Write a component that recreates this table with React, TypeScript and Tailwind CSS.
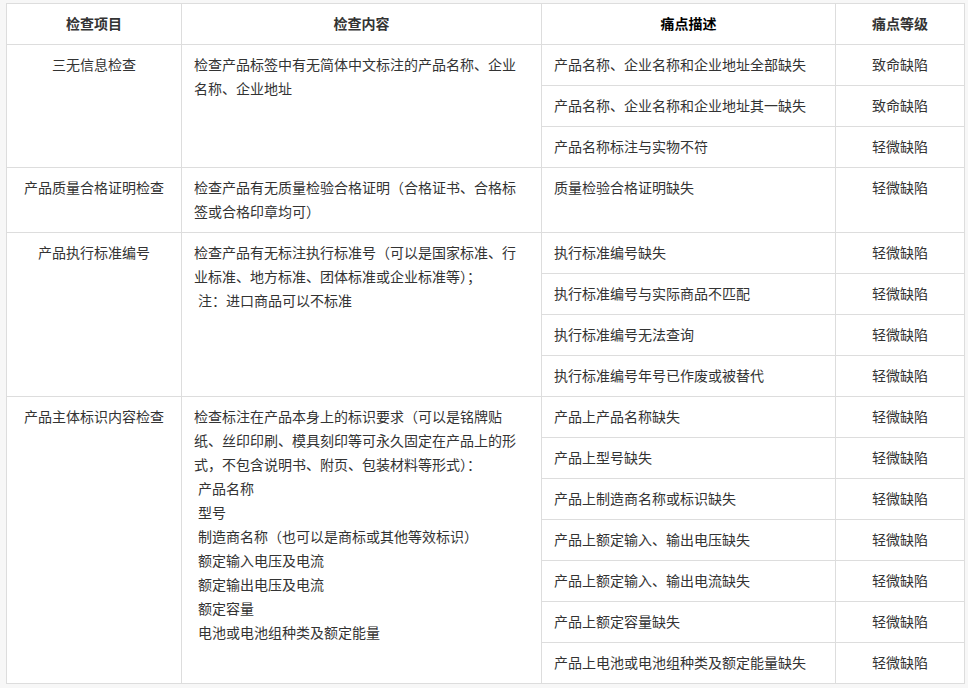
import type { ReactNode } from "react"

type SubRow = { desc: string; level: string }

type Group = {
  item: string
  content: ReactNode
  rows: SubRow[]
}

const fontStack = {
  fontFamily:
    '"Microsoft YaHei", "Noto Sans CJK SC", "Noto Sans", sans-serif',
}

const cellClass =
  "border border-[#dddddd] px-3 pt-[7px] pb-[9px] align-top text-[14px] leading-6 text-[#333333]"

const groups: Group[] = [
  {
    item: "三无信息检查",
    content: "检查产品标签中有无简体中文标注的产品名称、企业名称、企业地址",
    rows: [
      { desc: "产品名称、企业名称和企业地址全部缺失", level: "致命缺陷" },
      { desc: "产品名称、企业名称和企业地址其一缺失", level: "致命缺陷" },
      { desc: "产品名称标注与实物不符", level: "轻微缺陷" },
    ],
  },
  {
    item: "产品质量合格证明检查",
    content: "检查产品有无质量检验合格证明（合格证书、合格标签或合格印章均可）",
    rows: [{ desc: "质量检验合格证明缺失", level: "轻微缺陷" }],
  },
  {
    item: "产品执行标准编号",
    content: (
      <>
        <p>
          检查产品有无标注执行标准号（可以是国家标准、行业标准、地方标准、团体标准或企业标准等）；
        </p>
        <p className="pl-1">注：进口商品可以不标准</p>
      </>
    ),
    rows: [
      { desc: "执行标准编号缺失", level: "轻微缺陷" },
      { desc: "执行标准编号与实际商品不匹配", level: "轻微缺陷" },
      { desc: "执行标准编号无法查询", level: "轻微缺陷" },
      { desc: "执行标准编号年号已作废或被替代", level: "轻微缺陷" },
    ],
  },
  {
    item: "产品主体标识内容检查",
    content: (
      <>
        <p>
          检查标注在产品本身上的标识要求（可以是铭牌贴纸、丝印印刷、模具刻印等可永久固定在产品上的形式，不包含说明书、附页、包装材料等形式）：
        </p>
        {[
          "产品名称",
          "型号",
          "制造商名称（也可以是商标或其他等效标识）",
          "额定输入电压及电流",
          "额定输出电压及电流",
          "额定容量",
          "电池或电池组种类及额定能量",
        ].map((line) => (
          <p key={line} className="pl-1">
            {line}
          </p>
        ))}
      </>
    ),
    rows: [
      { desc: "产品上产品名称缺失", level: "轻微缺陷" },
      { desc: "产品上型号缺失", level: "轻微缺陷" },
      { desc: "产品上制造商名称或标识缺失", level: "轻微缺陷" },
      { desc: "产品上额定输入、输出电压缺失", level: "轻微缺陷" },
      { desc: "产品上额定输入、输出电流缺失", level: "轻微缺陷" },
      { desc: "产品上额定容量缺失", level: "轻微缺陷" },
      { desc: "产品上电池或电池组种类及额定能量缺失", level: "轻微缺陷" },
    ],
  },
]

export default function App() {
  return (
    <div
      className="min-h-screen bg-[#f7f7f7] pt-[3px] pl-[6px]"
      style={fontStack}
    >
      <table className="w-[958px] table-fixed border-collapse bg-white">
        <colgroup>
          <col className="w-[175px]" />
          <col className="w-[360px]" />
          <col className="w-[294px]" />
          <col className="w-[129px]" />
        </colgroup>
        <thead>
          <tr>
            <th className={`${cellClass} text-center font-bold`}>检查项目</th>
            <th className={`${cellClass} text-center font-bold`}>检查内容</th>
            <th className={`${cellClass} text-center font-bold text-black`}>
              痛点描述
            </th>
            <th className={`${cellClass} text-center font-bold`}>痛点等级</th>
          </tr>
        </thead>
        <tbody>
          {groups.map((group) =>
            group.rows.map((row, i) => (
              <tr key={group.item + row.desc}>
                {i === 0 && (
                  <>
                    <td
                      rowSpan={group.rows.length}
                      className={`${cellClass} text-center`}
                    >
                      {group.item}
                    </td>
                    <td rowSpan={group.rows.length} className={cellClass}>
                      {group.content}
                    </td>
                  </>
                )}
                <td className={cellClass}>{row.desc}</td>
                <td className={`${cellClass} text-center`}>{row.level}</td>
              </tr>
            ))
          )}
        </tbody>
      </table>
    </div>
  )
}
